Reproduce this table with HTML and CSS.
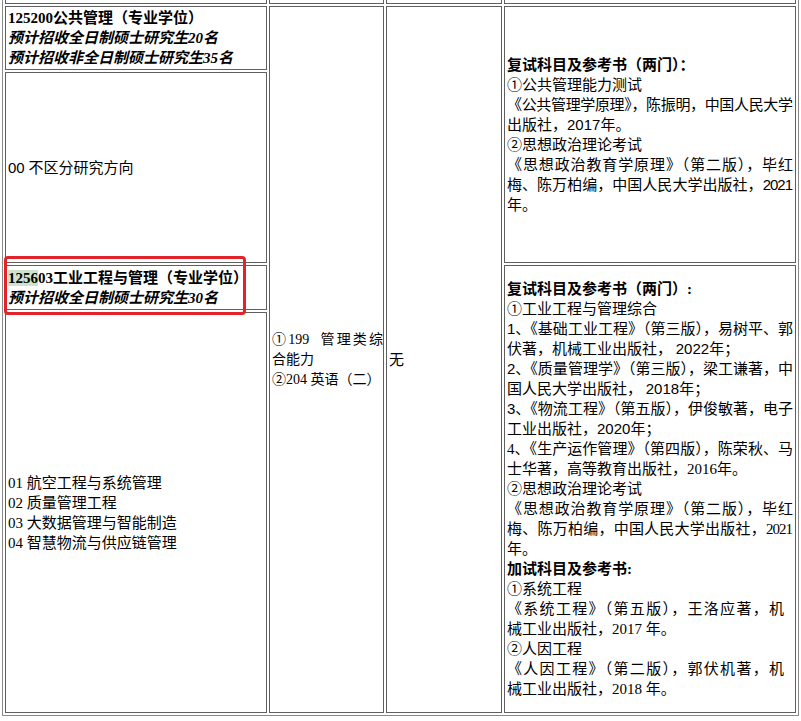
FILE: index.html
```html
<!DOCTYPE html>
<html lang="zh-CN">
<head>
<meta charset="utf-8">
<title>招生专业目录</title>
<link rel="stylesheet" href="styles.css">
</head>
<body>
<table class="catalog">
  <colgroup>
    <col class="c1"><col class="c2"><col class="c3"><col class="c4">
  </colgroup>
  <tbody>
    <tr class="r0"><td></td><td></td><td></td><td></td></tr>
    <tr class="ra">
      <td class="major">
        <div class="ln b">125200公共管理（专业学位）</div>
        <div class="ln bi">预计招收全日制硕士研究生20名</div>
        <div class="ln bi">预计招收非全日制硕士研究生35名</div>
      </td>
      <td rowspan="4" class="exam">
        <div class="ln j">①199&nbsp;&nbsp;管理类综</div>
        <div class="ln">合能力</div>
        <div class="ln">②204 英语（二）</div>
      </td>
      <td rowspan="4" class="none">无</td>
      <td rowspan="2" class="ref">
        <div class="ln b">复试科目及参考书（两门）：</div>
        <div class="ln">①公共管理能力测试</div>
        <div class="ln j">《公共管理学原理》，陈振明，中国人民大学</div>
        <div class="ln">出版社，<span class="s">2017</span>年。</div>
        <div class="ln">②思想政治理论考试</div>
        <div class="ln j">《思想政治教育学原理》（第二版），毕红</div>
        <div class="ln j">梅、陈万柏编，中国人民大学出版社，<span class="s">2021</span></div>
        <div class="ln">年。</div>
      </td>
    </tr>
    <tr class="rb">
      <td class="dir"><div class="ln"><span class="s">00</span> 不区分研究方向</div></td>
    </tr>
    <tr class="rc">
      <td class="major marked">
        <div class="ln b"><span class="hl">1256</span>03工业工程与管理（专业学位）</div>
        <div class="ln bi">预计招收全日制硕士研究生30名</div>
        <span class="redbox"></span>
      </td>
      <td rowspan="2" class="ref">
        <div class="ln b">复试科目及参考书（两门）:</div>
        <div class="ln">①工业工程与管理综合</div>
        <div class="ln j"><span class="s">1</span>、《基础工业工程》（第三版），易树平、郭</div>
        <div class="ln">伏著，机械工业出版社， <span class="s">2022</span>年；</div>
        <div class="ln j"><span class="s">2</span>、《质量管理学》（第三版），梁工谦著，中</div>
        <div class="ln">国人民大学出版社， <span class="s">2018</span>年；</div>
        <div class="ln j"><span class="s">3</span>、《物流工程》（第五版），伊俊敏著，电子</div>
        <div class="ln">工业出版社，<span class="s">2020</span>年；</div>
        <div class="ln j">4、《生产运作管理》（第四版），陈荣秋、马</div>
        <div class="ln">士华著，高等教育出版社，2016年。</div>
        <div class="ln">②思想政治理论考试</div>
        <div class="ln j">《思想政治教育学原理》（第二版），毕红</div>
        <div class="ln j">梅、陈万柏编，中国人民大学出版社，2021</div>
        <div class="ln">年。</div>
        <div class="ln b">加试科目及参考书:</div>
        <div class="ln">①系统工程</div>
        <div class="ln j short">《系统工程》（第五版），王洛应著，机</div>
        <div class="ln">械工业出版社，2017 年。</div>
        <div class="ln">②人因工程</div>
        <div class="ln j short">《人因工程》（第二版），郭伏机著，机</div>
        <div class="ln">械工业出版社，2018 年。</div>
      </td>
    </tr>
    <tr class="rd">
      <td class="dir">
        <div class="ln">01 航空工程与系统管理</div>
        <div class="ln">02 质量管理工程</div>
        <div class="ln">03 大数据管理与智能制造</div>
        <div class="ln">04 智慧物流与供应链管理</div>
      </td>
    </tr>
  </tbody>
</table>
</body>
</html>
```

FILE: styles.css
```css
html, body {
  margin: 0;
  padding: 0;
  background: #ffffff;
}

body {
  font-family: "Liberation Serif", "Noto Sans CJK SC", serif;
  font-size: 15px;
  line-height: 20px;
  color: #000000;
}

.catalog {
  margin: -19px 0 0 2px;
  width: 797px;
  table-layout: fixed;
  border-collapse: separate;
  border-spacing: 2px;
  border: 1px solid #8a8a8a;
}

.c1 { width: 262px; }
.c2 { width: 115px; }
.c3 { width: 116px; }
.c4 { width: 292px; }

.catalog td {
  border: 1px solid #5f5f5f;
  padding: 1px 0 1px 2px;
  vertical-align: middle;
  text-align: left;
}

.catalog td.ref {
  padding-right: 3px;
}

.r0 { height: 20px; }
.ra { height: 64px; }
.rb { height: 191px; }
.rc { height: 45px; }
.rd { height: 401px; }

.ln {
  white-space: nowrap;
}

.j {
  text-align: justify;
  text-align-last: justify;
  letter-spacing: -1px;
}

.short {
  padding-right: 9px;
}

.b {
  font-weight: bold;
}

.bi {
  font-weight: bold;
  font-style: italic;
}

.s {
  font-family: "Liberation Sans", "Noto Sans CJK SC", sans-serif;
}

.exam {
  font-size: 14px;
}

.exam .j {
  letter-spacing: 0;
}

.hl {
  background: #cfe2cd;
}

.marked {
  position: relative;
}

.redbox {
  position: absolute;
  left: -2px;
  top: -10px;
  width: 242px;
  height: 59px;
  box-sizing: border-box;
  border: 3px solid #e3232a;
  border-radius: 4px;
  pointer-events: none;
}
```
